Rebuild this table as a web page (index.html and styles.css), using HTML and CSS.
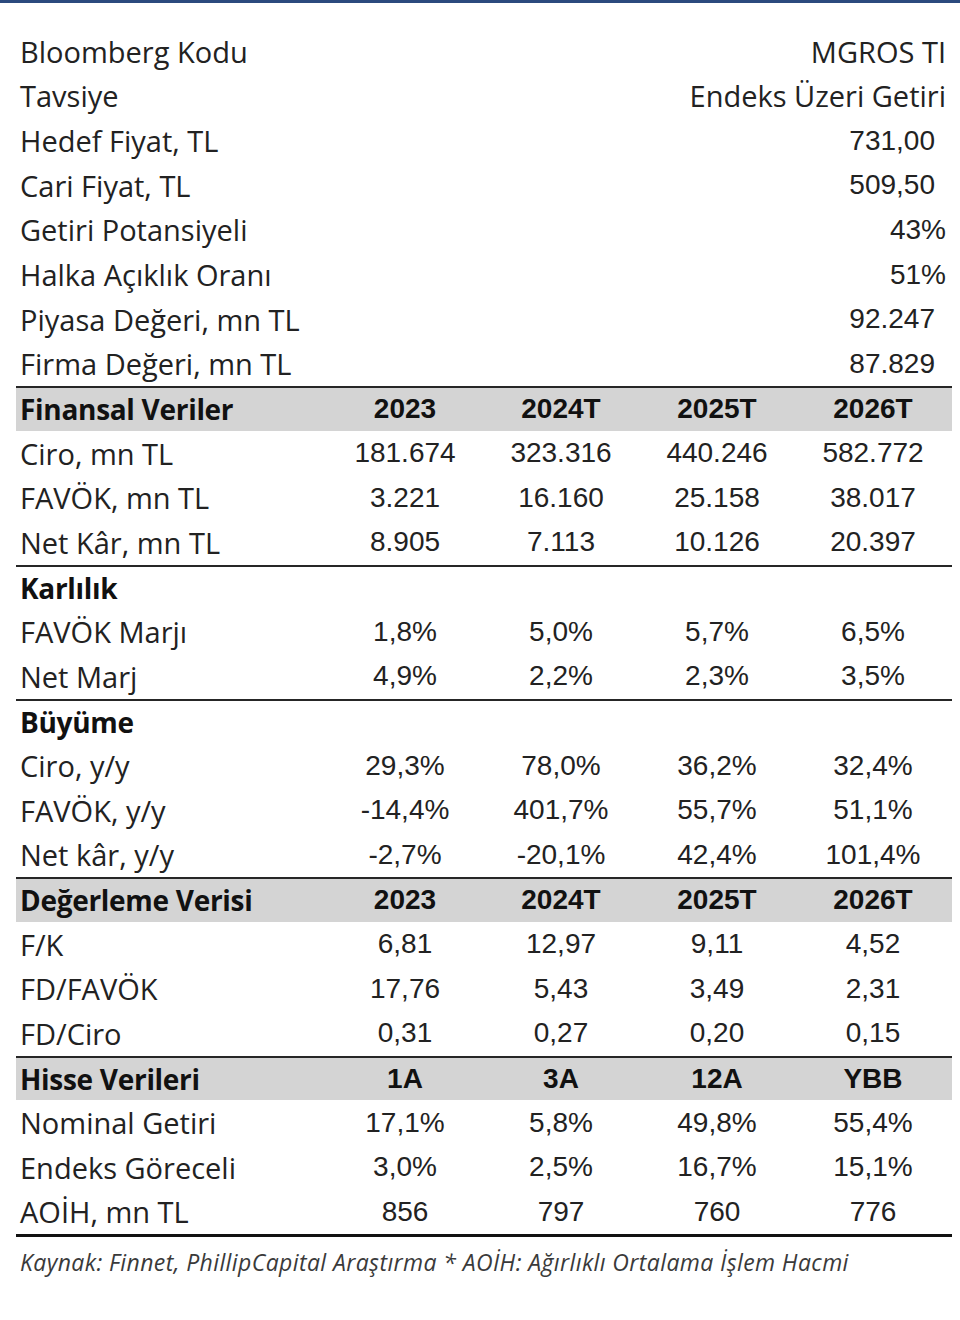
FILE: index.html
```html
<!DOCTYPE html>
<html lang="tr">
<head>
<meta charset="utf-8">
<title>MGROS TI</title>
<link rel="stylesheet" href="styles.css">
</head>
<body>
<div class="topbar"></div>
<div class="sheet">
  <div class="kv"><span class="lbl">Bloomberg Kodu</span><span class="val txt">MGROS TI</span></div>
  <div class="kv"><span class="lbl">Tavsiye</span><span class="val txt">Endeks Üzeri Getiri</span></div>
  <div class="kv"><span class="lbl">Hedef Fiyat, TL</span><span class="val num dec">731,00</span></div>
  <div class="kv"><span class="lbl">Cari Fiyat, TL</span><span class="val num dec">509,50</span></div>
  <div class="kv"><span class="lbl">Getiri Potansiyeli</span><span class="val num">43%</span></div>
  <div class="kv"><span class="lbl">Halka Açıklık Oranı</span><span class="val num">51%</span></div>
  <div class="kv"><span class="lbl">Piyasa Değeri, mn TL</span><span class="val num dec">92.247</span></div>
  <div class="kv"><span class="lbl">Firma Değeri, mn TL</span><span class="val num dec">87.829</span></div>

  <div class="row head"><span class="lbl">Finansal Veriler</span><span>2023</span><span>2024T</span><span>2025T</span><span>2026T</span></div>
  <div class="row"><span class="lbl">Ciro, mn TL</span><span>181.674</span><span>323.316</span><span>440.246</span><span>582.772</span></div>
  <div class="row"><span class="lbl">FAVÖK, mn TL</span><span>3.221</span><span>16.160</span><span>25.158</span><span>38.017</span></div>
  <div class="row"><span class="lbl">Net Kâr, mn TL</span><span>8.905</span><span>7.113</span><span>10.126</span><span>20.397</span></div>

  <div class="row sect"><span class="lbl">Karlılık</span></div>
  <div class="row"><span class="lbl">FAVÖK Marjı</span><span>1,8%</span><span>5,0%</span><span>5,7%</span><span>6,5%</span></div>
  <div class="row"><span class="lbl">Net Marj</span><span>4,9%</span><span>2,2%</span><span>2,3%</span><span>3,5%</span></div>

  <div class="row sect"><span class="lbl">Büyüme</span></div>
  <div class="row"><span class="lbl">Ciro, y/y</span><span>29,3%</span><span>78,0%</span><span>36,2%</span><span>32,4%</span></div>
  <div class="row"><span class="lbl">FAVÖK, y/y</span><span>-14,4%</span><span>401,7%</span><span>55,7%</span><span>51,1%</span></div>
  <div class="row"><span class="lbl">Net kâr, y/y</span><span>-2,7%</span><span>-20,1%</span><span>42,4%</span><span>101,4%</span></div>

  <div class="row head"><span class="lbl">Değerleme Verisi</span><span>2023</span><span>2024T</span><span>2025T</span><span>2026T</span></div>
  <div class="row"><span class="lbl">F/K</span><span>6,81</span><span>12,97</span><span>9,11</span><span>4,52</span></div>
  <div class="row"><span class="lbl">FD/FAVÖK</span><span>17,76</span><span>5,43</span><span>3,49</span><span>2,31</span></div>
  <div class="row"><span class="lbl">FD/Ciro</span><span>0,31</span><span>0,27</span><span>0,20</span><span>0,15</span></div>

  <div class="row head"><span class="lbl">Hisse Verileri</span><span>1A</span><span>3A</span><span>12A</span><span>YBB</span></div>
  <div class="row"><span class="lbl">Nominal Getiri</span><span>17,1%</span><span>5,8%</span><span>49,8%</span><span>55,4%</span></div>
  <div class="row"><span class="lbl">Endeks Göreceli</span><span>3,0%</span><span>2,5%</span><span>16,7%</span><span>15,1%</span></div>
  <div class="row last"><span class="lbl">AOİH, mn TL</span><span>856</span><span>797</span><span>760</span><span>776</span></div>

  <p class="note">Kaynak: Finnet, PhillipCapital Araştırma * AOİH: Ağırlıklı Ortalama İşlem Hacmi</p>
</div>
</body>
</html>
```

FILE: styles.css
```css
* { box-sizing: border-box; }
html, body { margin: 0; padding: 0; background: #ffffff; }
body { width: 960px; height: 1320px; overflow: hidden; color: #222; }

.topbar { height: 3px; background: #2b4a7e; }

.sheet {
  margin-left: 16px;
  width: 936px;
  padding-top: 26px;
}

.lbl {
  font-family: "Open Sans", "Noto Sans", sans-serif;
  font-size: 29px;
  color: #222;
  padding-left: 4px;
  white-space: nowrap;
}

.kv {
  height: 44.65px;
  display: flex;
  align-items: center;
  justify-content: space-between;
}
.val { white-space: nowrap; color: #222; }
.val.txt {
  font-family: "Open Sans", "Noto Sans", sans-serif;
  font-size: 29px;
  padding-right: 6px;
}
.val.num {
  font-family: "Liberation Sans", Arial, sans-serif;
  font-size: 28px;
  padding-right: 6px;
}
.val.num.dec { padding-right: 17px; }

.row {
  height: 44.65px;
  display: grid;
  grid-template-columns: 311px repeat(4, 156px);
  align-items: center;
}
.row > span:not(.lbl) {
  text-align: center;
  font-family: "Liberation Sans", Arial, sans-serif;
  font-size: 28px;
  color: #222;
}
.row.head {
  background: #d4d4d4;
  border-top: 2px solid #262626;
}
.row.head > span {
  font-weight: bold;
  color: #111;
}
.row.head .lbl, .row.sect .lbl {
  font-weight: 700;
  font-size: 28px;
  letter-spacing: -0.3px;
  color: #111;
}
.row.sect { border-top: 2px solid #262626; }
.row.last {
  height: 47.65px;
  border-bottom: 3px solid #111;
}

.note {
  margin: 9px 0 0 0;
  padding-left: 4px;
  font-family: "Open Sans", "Noto Sans", sans-serif;
  font-style: italic;
  font-size: 23px;
  letter-spacing: 0.4px;
  color: #3a3a3a;
  white-space: nowrap;
}
```
